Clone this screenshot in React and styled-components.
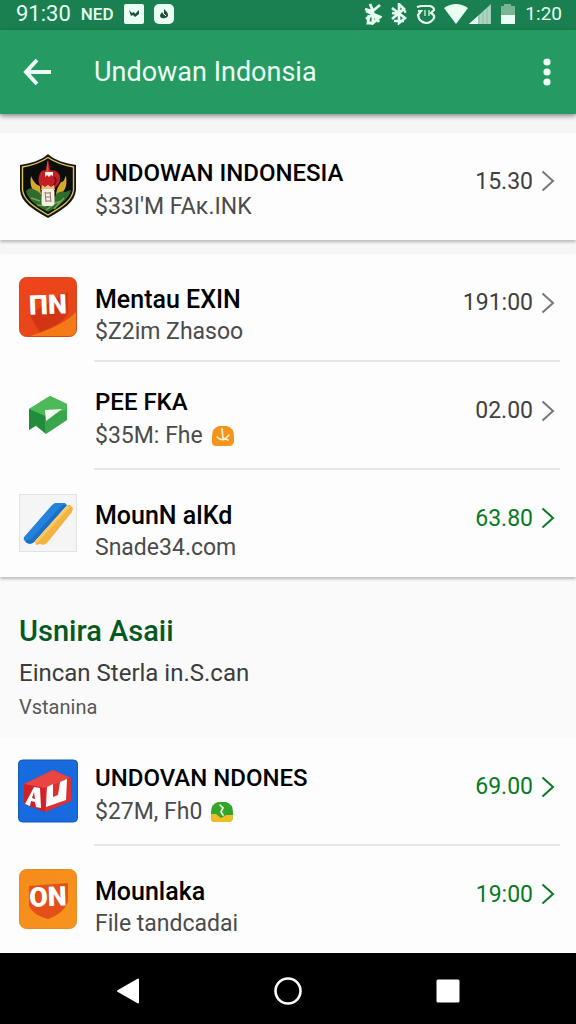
import React from 'react';
import styled, { createGlobalStyle } from 'styled-components';

const GlobalStyle = createGlobalStyle`
  *, *::before, *::after { box-sizing: border-box; }
  body {
    margin: 0;
    background: #f6f6f6;
    color: #000;
    font-family: Roboto, "Liberation Sans", sans-serif;
  }
  button { font: inherit; }
`;

const Screen = styled.div`
  min-height: 100vh;
  display: flex;
  flex-direction: column;
`;

const StatusBar = styled.div`
  height: 30px;
  padding: 0 14px 3px 16px;
  display: flex;
  align-items: center;
  justify-content: space-between;
  background: #1a8051;
  color: #e6fff0;
`;

const StatusGroup = styled.div`
  display: flex;
  align-items: center;
  gap: ${({ $gap }) => $gap}px;
  svg { display: block; }
`;

const Clock = styled.span`
  font-size: ${({ $large }) => ($large ? 22 : 19)}px;
  line-height: 24px;
`;

const Carrier = styled.span`
  font-size: 17px;
  font-weight: 500;
`;

const AppBar = styled.header`
  position: relative;
  height: 84px;
  padding: 0 14px 0 20px;
  display: flex;
  align-items: center;
  background: #259b63;
  color: #edfff5;
  box-shadow: 0 2px 5px rgba(0, 0, 0, 0.45);
`;

const BarTitle = styled.h1`
  flex: 1;
  margin: 0 0 0 40px;
  font-size: 27px;
  line-height: 36px;
  font-weight: 400;
`;

const IconButton = styled.button`
  display: flex;
  padding: 0;
  border: 0;
  background: none;
  color: inherit;
`;

const Content = styled.main`
  flex: 1;
  display: flex;
  flex-direction: column;
  padding-top: 19px;
`;

const Card = styled.section`
  position: relative;
  background: #fdfdfd;
  box-shadow: ${({ $flat }) => ($flat ? 'none' : '0 2px 3px rgba(0, 0, 0, 0.26)')};
  margin-bottom: ${({ $gap }) => $gap || 0}px;
  flex-grow: ${({ $flat }) => ($flat ? 1 : 0)};
`;

const Row = styled.a`
  display: flex;
  align-items: stretch;
  height: ${({ $divided }) => ($divided ? 108 : 107)}px;
  padding: 0 16px 0 18px;
  color: inherit;
  text-decoration: none;
`;

const Thumb = styled.div`
  width: 60px;
  margin-right: 16px;
  padding-bottom: 2px;
  display: flex;
  align-items: center;
  justify-content: center;
  svg { display: block; }
`;

const RowBody = styled.div`
  flex: 1;
  display: flex;
  border-bottom: 2px solid ${({ $divided }) => ($divided ? '#e6e6e6' : 'transparent')};
`;

const RowText = styled.div`
  flex: 1;
  display: flex;
  flex-direction: column;
  justify-content: center;
  padding: ${({ $low }) => ($low ? 18 : 8)}px 0 0 1px;
`;

const RowTitle = styled.span`
  font-size: ${({ $caps }) => ($caps ? 24 : 25)}px;
  line-height: ${({ $low }) => ($low ? 32 : 34)}px;
  font-weight: 500;
  color: #000;
`;

const RowSub = styled.span`
  display: flex;
  align-items: center;
  gap: 8px;
  font-size: 23px;
  line-height: ${({ $low }) => ($low ? 32 : 34)}px;
  color: #4b4b4b;
`;

const RowValue = styled.span`
  display: flex;
  align-items: center;
  gap: 8px;
  padding: 0 5px 9px 0;
  font-size: 23px;
  color: ${({ $green }) => ($green ? '#087a22' : '#404040')};
  svg { display: block; color: ${({ $green }) => ($green ? '#087a22' : '#777')}; }
`;

const Promo = styled.section`
  height: 161px;
  padding: 36px 19px 0;
  background: #fafafa;
`;

const PromoTitle = styled.h2`
  margin: 0;
  font-size: 29px;
  line-height: 36px;
  font-weight: 500;
  color: #05591f;
`;

const PromoText = styled.p`
  margin: 6px 0 0;
  font-size: 24px;
  line-height: 36px;
  color: #3c3c3c;
`;

const PromoNote = styled.p`
  margin: 2px 0 0;
  font-size: 20px;
  line-height: 28px;
  color: #585858;
`;

const NavBar = styled.nav`
  height: 71px;
  padding: 4px 48px 0;
  display: flex;
  align-items: center;
  background: #000;
  color: #fff;
`;

const NavButton = styled(IconButton)`
  flex: 1;
  justify-content: center;
`;

const Chevron = () => (
  <svg width="14" height="22" viewBox="0 0 14 22" fill="none" stroke="currentColor" strokeWidth="2">
    <path d="M1.5 1.5L12 11L1.5 20.5" />
  </svg>
);

const Crest = () => (
  <svg width="60" height="66" viewBox="0 0 60 66">
    <path d="M30 1C38 8 47 10 58 12L58 37C57 49 46 56 30 65C14 56 3 49 2 37L2 12C13 10 22 8 30 1Z" fill="#171510" />
    <path d="M30 4.500C38 10 47 12.500 55.500 14L55.500 37C54 47 45 53.500 30 62C15 53.500 6 47 4.500 37L4.500 14C13 12.500 22 10 30 4.500Z" fill="#0b0d0a" stroke="#d9c45a" strokeWidth="1.400" />
    <path d="M13 23C11 33 15 41 23 42L22 33C18 32 15 28 13 23ZM48 23C46 25 47 29 43 29C42 32 39 33 38 42C46 41 50 34 48 23Z" fill="#d6a92b" />
    <path d="M8 38Q12 33 17 37Q22 38 24 45L36 45Q40 37 47 39L53 37Q51 48 30 59Q10 49 8 38Z" fill="#2e6b2c" />
    <path d="M13 45L22 48M19 52L28 53M35 51L43 48M36 56L46 45M28 57L34 53" stroke="#77a64b" strokeWidth="1.500" />
    <path d="M30 6L32 17Q42 17 42 25Q42 32 36 35L24 35Q18 30 22 20Q24 17 28 17Z" fill="#c31f25" />
    <path d="M29.500 7L31 20L28 20Z" fill="#ee4a42" />
    <path d="M27 19H35V23L33 22L31 24L29 22L27 24Z" fill="#fff2e8" />
    <path d="M36 24Q40 28 35 33" stroke="#7f1017" strokeWidth="2" fill="none" />
    <path d="M24 32L27 34L30 32L33 34L36 32L37 37H23Z" fill="#e4bf7e" />
    <rect x="23.500" y="36" width="13" height="17" rx="3" fill="#f5eee2" />
    <path d="M27 39L28 49M32 39L33 49M27 40H33M28 44H32M28 48H33" stroke="#8a7664" strokeWidth="1" />
  </svg>
);

const LetterTile = ({ id, from, to, shield, edge, curved }) => (
  <svg width="60" height="62" viewBox="0 0 60 62">
    <defs>
      <linearGradient id={id} x1="0" y1="0" x2="1" y2="1">
        <stop offset="0" stopColor={from} />
        <stop offset="1" stopColor={to} />
      </linearGradient>
    </defs>
    <rect x="1.500" y="1.500" width="57" height="59" rx="7" fill={`url(#${id})`} stroke={edge} />
    {curved ? (
      <>
        <path d="M11 38L50 16V36Q48 44 36 50L22 56Q16 48 11 38Z" fill={shield} opacity="0.700" />
        <path d="M58 36Q45 50 12 60H51Q58 60 58 53Z" fill="#f47a18" />
      </>
    ) : (
      <path d="M11 18L50 15V34Q45 46 30 51Q15 47 11 38Z" fill={shield} />
    )}
    <text x="30" y="38" textAnchor="middle" fontFamily="Roboto, sans-serif" fontSize="27" fontWeight="900" fill="#fff" transform="rotate(-2 30 30)">{curved ? 'ПN' : 'ON'}</text>
  </svg>
);

const GreenTag = () => (
  <svg width="40" height="38" viewBox="0 0 40 38">
    <path d="M22 0L39 8V24L18 38L8 30L1 34V13Z" fill="#38a64b" />
    <path d="M22 0L39 8L38 14L17 20L1 13Z" fill="#4dba59" />
    <path d="M1 13L17 20V37L8 29L1 34Z" fill="#238c3b" />
    <path d="M17 14L34 13L18 25Z" fill="#f7fff5" />
  </svg>
);

const Pencils = () => (
  <svg width="60" height="58" viewBox="0 0 60 58">
    <rect x="1.500" y="0.500" width="57" height="57" fill="#f5f5f6" stroke="#e2e2e2" />
    <path d="M34 11L37 9H47L49 11L17 47Q14 51 9 49L6 46Q5 44 7 42Z" fill="#2383da" />
    <path d="M49 11L17 47Q14 51 9 49L7 47L13 45L44 11Z" fill="#1b6fc4" />
    <path d="M49 12Q50 10 52 11L55 14L54 18L29 49Q26 52 22 50L18 51L17 47Z" fill="#f2b341" />
    <path d="M49 12L17 47L19 49L52 13Z" fill="#f9c968" />
  </svg>
);

const RedBox = () => (
  <svg width="60" height="64" viewBox="0 0 60 64">
    <rect x="0.500" y="1" width="59" height="62" rx="4" fill="#176bdf" stroke="#1559ba" />
    <path d="M6 25L35 11L53 19V42L27 53L6 45Z" fill="#cd2228" />
    <path d="M6 25L35 11L53 19L27 29Z" fill="#ea4540" />
    <path d="M27 29L53 19V42L27 53Z" fill="#dd3031" />
    <path d="M16 28L22 29L23 49L18 48L17 43L13 42L12 47L7 45ZM16 33L14 39L17 40Z" fill="#fff" fillRule="evenodd" />
    <path d="M29 28L35 25V38L40 36L42 23L49 20L48 41L28 48Z" fill="#fff" />
  </svg>
);

const OrangeBadge = () => (
  <svg width="24" height="22" viewBox="0 0 24 22">
    <path d="M8 1H16Q23 3 23 11V17Q22 21 18 21H5Q1 21 1 17V11Q1 3 8 1Z" fill="#f6921e" />
    <path d="M11 4L12 13M6 12Q10 16 14 14L18 10M12 13L17 15" fill="none" stroke="#fff0c7" strokeWidth="1.700" strokeLinecap="round" />
  </svg>
);

const GreenBadge = () => (
  <svg width="24" height="22" viewBox="0 0 24 22">
    <path d="M8 1H16Q23 3 23 11V17Q22 21 18 21H5Q1 21 1 17V11Q1 3 8 1Z" fill="#33a52d" />
    <path d="M1 13L6 13L11 17L16 14H23V17Q22 21 18 21H5Q1 21 1 17Z" fill="#f0bd27" />
    <path d="M10 4L13 7L11 11L13 14" fill="none" stroke="#efffdd" strokeWidth="1.700" strokeLinecap="round" />
  </svg>
);

const groups = [
  {
    gap: 14,
    rows: [{ icon: <Crest />, title: 'UNDOWAN INDONESIA', caps: true, sub: "$33I'M FAĸ.INK", value: '15.30' }],
  },
  {
    rows: [
      { icon: <LetterTile id="redTile" from="#f0441c" to="#e24816" shield="#c92d12" edge="#d34a1c" curved />, title: 'Mentau EXIN', sub: '$Z2im Zhasoo', value: '191:00', low: true },
      { icon: <GreenTag />, title: 'PEE FKA', caps: true, sub: '$35M: Fhe', badge: <OrangeBadge />, value: '02.00' },
      { icon: <Pencils />, title: 'MounN alKd', sub: 'Snade34.com', value: '63.80', low: true, green: true },
    ],
  },
];

const recent = [
  { icon: <RedBox />, title: 'UNDOVAN NDONES', caps: true, sub: '$27M, Fh0', badge: <GreenBadge />, value: '69.00', green: true },
  { icon: <LetterTile id="orangeTile" from="#f58b1c" to="#f7941d" shield="#e3501a" edge="#e58a28" />, title: 'Mounlaka', sub: 'File tandcadai', value: '19:00', low: true, green: true },
];

const ListRow = ({ item, divided }) => (
  <Row href="#" $divided={divided}>
    <Thumb>{item.icon}</Thumb>
    <RowBody $divided={divided}>
      <RowText $low={item.low}>
        <RowTitle $caps={item.caps} $low={item.low}>{item.title}</RowTitle>
        <RowSub $low={item.low}>{item.sub}{item.badge}</RowSub>
      </RowText>
      <RowValue $green={item.green}>{item.value}<Chevron /></RowValue>
    </RowBody>
  </Row>
);

const Rows = ({ items }) =>
  items.map((item, i) => <ListRow key={item.title} item={item} divided={i < items.length - 1} />);

export default function App() {
  return (
    <Screen>
      <GlobalStyle />
      <StatusBar>
        <StatusGroup $gap={10}>
          <Clock $large>91:30</Clock>
          <Carrier>NED</Carrier>
          <svg width="20" height="20" viewBox="0 0 20 20">
            <rect width="20" height="20" rx="2" fill="#e9fff3" />
            <path d="M5 6L8 9L10 8L11 10L15 6V10L11 13L9 11L7 12Z" fill="#244c3b" />
          </svg>
          <svg width="20" height="20" viewBox="0 0 20 20">
            <rect width="20" height="20" rx="5" fill="#e9fff3" />
            <path d="M10 5L13 8Q16 13 11 14Q6 15 6 11L8 8L10 11Z" fill="#244c3b" />
            <path d="M10 10L12 12" stroke="#e9fff3" />
          </svg>
        </StatusGroup>
        <StatusGroup $gap={8}>
          <svg width="18" height="22" viewBox="0 0 18 22" fill="none" stroke="currentColor" strokeWidth="2.800">
            <path d="M1 6L7 8L15 19M6 1L9 8V20L16 14L2 8M10 7L16 2M2 16L8 12" />
            <path d="M5 12L4 20H9" />
          </svg>
          <svg width="18" height="22" viewBox="0 0 18 22" fill="none" stroke="currentColor" strokeWidth="2.600">
            <path d="M2 5L15 15L9 20V1L14 6L2 16M4 18L14 18M2 10L8 11M14 9L16 8" />
          </svg>
          <svg width="20" height="22" viewBox="0 0 20 22" fill="none" stroke="currentColor" strokeWidth="2.200">
            <path d="M1 4L5 3H14Q18 4 18 7L15 10Q19 12 18 15Q15 20 10 20Q3 19 2 12L5 8H2" />
            <path d="M9 7V13M13 7V13" strokeWidth="1.200" />
          </svg>
          <StatusGroup $gap={1}>
            <svg width="24" height="20" viewBox="0 0 24 20">
              <path d="M0 4Q12 -4 24 4L12 20Z" fill="#e9fff3" />
            </svg>
            <svg width="22" height="20" viewBox="0 0 22 20">
              <path d="M0 20L22 0V20Z" fill="#9bcbb2" />
              <path d="M0 20L9 12V20Z" fill="#e9fff3" />
              <path d="M12 10V20M16 6V20M20 3V20" stroke="#bce0cd" strokeWidth="1" />
            </svg>
          </StatusGroup>
          <svg width="18" height="20" viewBox="0 0 18 20">
            <path d="M5 0H12V2H16V12H2V2H5Z" fill="#78b595" />
            <path d="M2 11H16V20H2Z" fill="#e9fff3" />
          </svg>
          <Clock>1:20</Clock>
        </StatusGroup>
      </StatusBar>
      <AppBar>
        <IconButton aria-label="Back">
          <svg width="34" height="30" viewBox="0 0 34 30" fill="none" stroke="currentColor" strokeWidth="4">
            <path d="M17 3L6 15L17 27M6 15H31" />
          </svg>
        </IconButton>
        <BarTitle>Undowan Indonsia</BarTitle>
        <IconButton aria-label="More options">
          <svg width="30" height="28" viewBox="0 0 30 28" fill="currentColor">
            <circle cx="15" cy="4" r="3.600" />
            <circle cx="15" cy="14" r="3.600" />
            <circle cx="15" cy="24" r="3.600" />
          </svg>
        </IconButton>
      </AppBar>
      <Content>
        {groups.map((group) => (
          <Card key={group.rows[0].title} $gap={group.gap}>
            <Rows items={group.rows} />
          </Card>
        ))}
        <Promo>
          <PromoTitle>Usnira Asaii</PromoTitle>
          <PromoText>Eincan Sterla in.S.can</PromoText>
          <PromoNote>Vstanina</PromoNote>
        </Promo>
        <Card $flat>
          <Rows items={recent} />
        </Card>
      </Content>
      <NavBar aria-label="System">
        <NavButton aria-label="Back">
          <svg width="24" height="26" viewBox="0 0 24 26">
            <path d="M22 1.500V24.500L2 13Z" fill="currentColor" stroke="currentColor" strokeWidth="2" strokeLinejoin="round" />
          </svg>
        </NavButton>
        <NavButton aria-label="Home">
          <svg width="28" height="28" viewBox="0 0 28 28">
            <circle cx="14" cy="14" r="12.500" fill="none" stroke="currentColor" strokeWidth="2.600" />
          </svg>
        </NavButton>
        <NavButton aria-label="Recent apps">
          <svg width="24" height="24" viewBox="0 0 24 24">
            <rect x="0.500" y="0.500" width="23" height="23" rx="1.500" fill="currentColor" />
          </svg>
        </NavButton>
      </NavBar>
    </Screen>
  );
}
